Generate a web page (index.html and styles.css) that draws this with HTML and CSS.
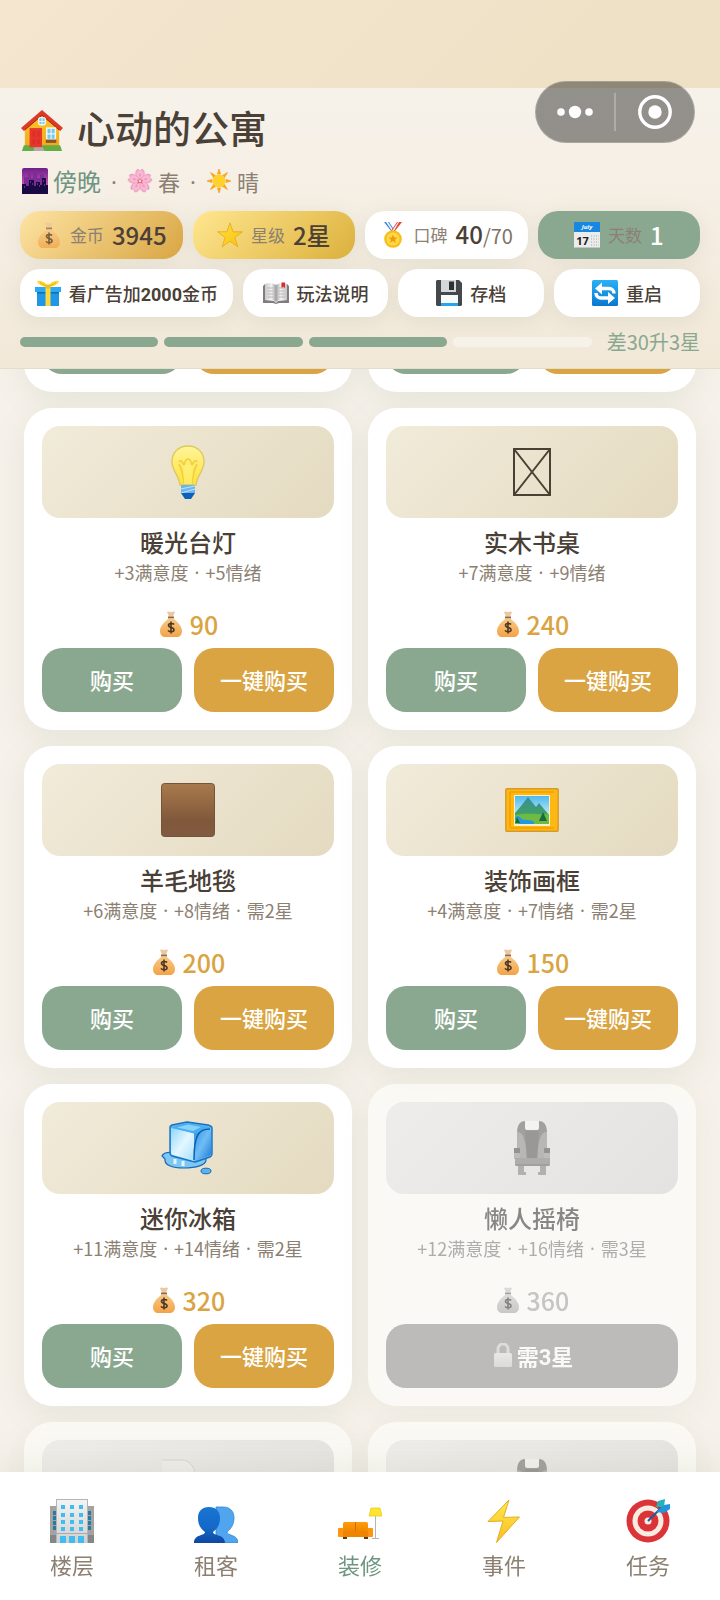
FILE: index.html
```
<!DOCTYPE html>
<html lang="zh-CN">
<head>
<meta charset="utf-8">
<meta name="viewport" content="width=device-width, initial-scale=1">
<title>心动的公寓</title>
<link rel="stylesheet" href="styles.css">
</head>
<body>
<svg class="sprite" aria-hidden="true">
  <defs>
    <linearGradient id="g-wall" x1="0" y1="0" x2="0" y2="1"><stop offset="0" stop-color="#fbc82a"/><stop offset="1" stop-color="#f3a91c"/></linearGradient>
    <linearGradient id="g-dusk" x1="0" y1="0" x2="0" y2="1"><stop offset="0" stop-color="#6a1f8c"/><stop offset=".5" stop-color="#b548a4"/><stop offset="1" stop-color="#ef7a8f"/></linearGradient>
    <radialGradient id="g-petal"><stop offset="0" stop-color="#f28fb8"/><stop offset=".5" stop-color="#f9c0d8"/><stop offset="1" stop-color="#f0a6c7"/></radialGradient>
    <linearGradient id="g-bag" x1="0" y1="0" x2="0" y2="1"><stop offset="0" stop-color="#f8c983"/><stop offset="1" stop-color="#f3a348"/></linearGradient>
    <linearGradient id="g-star" x1="0" y1="0" x2="1" y2="1"><stop offset="0" stop-color="#ffe23c"/><stop offset="1" stop-color="#fbbf10"/></linearGradient>
    <linearGradient id="g-blue" x1="0" y1="0" x2="0" y2="1"><stop offset="0" stop-color="#29b1f5"/><stop offset="1" stop-color="#0a78cf"/></linearGradient>
    <linearGradient id="g-page" x1="0" y1="0" x2="1" y2="0"><stop offset="0" stop-color="#c9c9c9"/><stop offset=".3" stop-color="#f1f1f1"/><stop offset=".5" stop-color="#9f9f9f"/><stop offset=".7" stop-color="#f1f1f1"/><stop offset="1" stop-color="#c2c2c2"/></linearGradient>
    <linearGradient id="g-bulb" x1="0" y1="0" x2="0" y2="1"><stop offset="0" stop-color="#fff59a"/><stop offset="1" stop-color="#ffe13a"/></linearGradient>
    <linearGradient id="g-rug" x1="0" y1="0" x2="0" y2="1"><stop offset="0" stop-color="#a97a4d"/><stop offset=".7" stop-color="#80583b"/><stop offset="1" stop-color="#815b40"/></linearGradient>
    <linearGradient id="g-sky" x1="0" y1="0" x2="0" y2="1"><stop offset="0" stop-color="#4fb9f3"/><stop offset=".7" stop-color="#c5ecf2"/></linearGradient>
    <linearGradient id="g-hill" x1="0" y1="0" x2="0" y2="1"><stop offset="0" stop-color="#3c8c98"/><stop offset="1" stop-color="#3fa757"/></linearGradient>
    <linearGradient id="g-iceL" x1="0" y1="0" x2="1" y2="1"><stop offset="0" stop-color="#8dd6fa"/><stop offset=".5" stop-color="#e4f7ff"/><stop offset="1" stop-color="#a9dffb"/></linearGradient>
    <linearGradient id="g-iceR" x1="0" y1="0" x2="1" y2="1"><stop offset="0" stop-color="#2b93e6"/><stop offset=".5" stop-color="#70bdf5"/><stop offset="1" stop-color="#1b79d3"/></linearGradient>
    <linearGradient id="g-tower" x1="0" y1="0" x2="0" y2="1"><stop offset="0" stop-color="#f4f4f4"/><stop offset="1" stop-color="#cfcfcf"/></linearGradient>
    <linearGradient id="g-man" x1="0" y1="0" x2="0" y2="1"><stop offset="0" stop-color="#1976d2"/><stop offset=".6" stop-color="#1467c6"/><stop offset="1" stop-color="#0d47a1"/></linearGradient>
    <linearGradient id="g-sofa" x1="0" y1="0" x2="0" y2="1"><stop offset="0" stop-color="#ff9d0a"/><stop offset="1" stop-color="#ef7f00"/></linearGradient>
    <linearGradient id="g-bolt" x1="0" y1="0" x2="0" y2="1"><stop offset="0" stop-color="#ffe94a"/><stop offset="1" stop-color="#fbbd22"/></linearGradient>
    <linearGradient id="g-lock" x1="0" y1="0" x2="0" y2="1"><stop offset="0" stop-color="#e2e2e2"/><stop offset="1" stop-color="#cccccc"/></linearGradient>
  </defs>

  <symbol id="i-house" viewBox="0 0 44 44">
    <path d="M4 20 22 4 40 20V40H4Z" fill="url(#g-wall)"/>
    <path d="M0 20 22 1 44 20 41 23 22 7 3 23Z" fill="#dd3a26"/>
    <path d="M4 22 22 6.500 40 22" fill="none" stroke="#a8261c" stroke-width="1"/>
    <path d="M1 44 3 38H41L43 44Z" fill="#63ad43"/><path d="M13 44 14 39H22L25 44Z" fill="#b6a8a5"/>
    <rect x="9" y="20" width="13" height="20" fill="#e8362c"/><path d="M12 23h3v6h-3zM17 23h3v6h-3zM12 32h3v5h-3zM17 32h3v5h-3z" fill="#d93028"/>
    <rect x="27" y="20" width="9" height="12" fill="#6dccf2" stroke="#f7f3ea" stroke-width="1.600"/><path d="M31.500 20v12M27 26h9" stroke="#f7f3ea" stroke-width="1.200"/>
    <rect x="26" y="32" width="11" height="3.500" fill="#8a5526"/>
    <rect x="18.500" y="9" width="7" height="7.500" rx="2" fill="#6dccf2" stroke="#f7f3ea" stroke-width="1.400"/><path d="M22 9v7.500M18.500 13h7" stroke="#f7f3ea"/>
  </symbol>
  <symbol id="i-city" viewBox="0 0 26 26">
    <rect width="26" height="26" rx="2" fill="url(#g-dusk)"/>
    <path d="M2 18V9h4V5h3v5h2V3l2-2 2 2v7h3V6h4v5h2v9Z" fill="#7c2d97"/>
    <path d="M0 26V16h4v2h3v-6h5v6h2v-4h4v3h2v-7h4v7h2v9Z" fill="#170a45"/>
    <path d="M2 19h1M8 14h1M10 16h1M15 16h1M21 13h1M17 18h1M22 17h1" stroke="#b0656b"/>
  </symbol>
  <symbol id="i-flower" viewBox="0 0 26 26">
    <g fill="url(#g-petal)" stroke="#ec94ba" stroke-width=".5">
      <path id="petal" d="M13 13C7 8 8 2 11 1l2 2 2-2c3 1 4 7-2 12Z"/>
      <use href="#petal" transform="rotate(72 13 13)"/><use href="#petal" transform="rotate(144 13 13)"/><use href="#petal" transform="rotate(216 13 13)"/><use href="#petal" transform="rotate(288 13 13)"/>
    </g>
    <path d="m13 9.500.8 2.400 2.500-.3-1.600 1.900 1.200 2.500L13 14.800 10.100 16l1.200-2.500-1.600-1.900 2.500.3Z" fill="#e65c90"/><circle cx="13" cy="13" r="1.200" fill="#fbe58a"/>
  </symbol>
  <symbol id="i-sun" viewBox="0 0 26 26">
    <path d="m13 1 1.500 5h-3ZM13 25l1.500-5h-3ZM1 13l5-1.500v3ZM25 13l-5-1.500v3ZM4.500 4.500 9.500 7.500l-2 2ZM21.500 4.500l-5 3 2 2ZM4.500 21.500l3-5 2 2ZM21.500 21.500l-3-5-2 2Z" fill="#f9a61c" stroke="#f9a61c" stroke-width=".8"/>
    <circle cx="13" cy="13" r="6.500" fill="#ffd12b"/>
  </symbol>
  <symbol id="i-coin" viewBox="0 0 26 26">
    <path d="M9 1c1.500-1.300 2.800 0 4 0s2.500-1.300 4 0l-2 4.500h-4Z" fill="#ecc7a0"/><path d="M10 5.500h6v2h-6z" fill="#8a6a48"/>
    <path d="M10.500 7.500h5c3 3 8.500 7 8.500 12.500 0 4-2.500 6-5 6H7c-2.500 0-5-2-5-6 0-5.500 5.500-9.500 8.500-12.500Z" fill="url(#g-bag)"/>
    <path d="M16 13.500c-1-1.500-5.500-1.500-5.500.8 0 3 5.500 1.600 5.500 4.600 0 2.300-4.800 2.300-6 .5M13 10.500v12" fill="none" stroke="#4b3627" stroke-width="1.600"/>
  </symbol>
  <symbol id="i-star" viewBox="0 0 26 26"><path d="m13 .8 3 9h9.400l-7.600 5.600 3 9.400L13 19.200l-7.800 5.600 3-9.400L.6 9.800H10Z" fill="url(#g-star)" stroke="#dba31d" stroke-width=".7"/></symbol>
  <symbol id="i-medal" viewBox="0 0 26 26">
    <path d="M4 0h5l6 9h-4Z" fill="#3586dc"/><path d="M6 0h2l6 9h-2Z" fill="#f3f0f2"/><path d="M22 0h-5l-6 9h4Z" fill="#e3483c"/><path d="M19 0h-1l-6 9h2Z" fill="#f3f0f2"/>
    <circle cx="13" cy="17" r="8.800" fill="#f9bd17"/><circle cx="13" cy="17" r="6.600" fill="#ffd84a"/><path d="m13 12.500 1.300 3h3.200L15 17.700l1 3.300-3-1.900-3 1.900 1-3.300-2.500-2.200h3.200Z" fill="#ee9e0c"/>
  </symbol>
  <symbol id="i-gift" viewBox="0 0 26 26">
    <path d="M2 10h22v16H2z" fill="#1f96e6"/><path d="M0 7h26v5H0z" fill="#2ba9f2"/><path d="M2 12h22v1.500H2z" fill="#0c6fb8"/>
    <path d="M10.500 7h5v19h-5z" fill="#fbd83b"/><path d="M13 7C9 7 3 5 2 1c4-1 9 1 11 6ZM13 7c4 0 10-2 11-6-4-1-9 1-11 6Z" fill="#fdd935"/><path d="M12 6C9 5 7 4 5 2.500M14 6c3-1 5-2 7-3.500" stroke="#e3ab14" fill="none"/><rect x="10.500" y="4.500" width="5" height="4" rx="1" fill="#f2bd22"/>
  </symbol>
  <symbol id="i-book" viewBox="0 0 26 26">
    <path d="M0 6 2 4v16l9 1 2 2 2-2 9-1V4l2 2v17H16l-3 1-3-1H0Z" fill="#827d7d"/>
    <path d="M2 4c4-2 8-1 11 1 3-2 7-3 11-1v16c-4-1-8-1-11 2-3-3-7-3-11-2Z" fill="url(#g-page)"/>
    <path d="M4.500 8h6M4.500 11h6M4.500 14h6M4.500 17h6M15.500 8h6M15.500 11h6M15.500 14h6M15.500 17h6" stroke="#b5b5b5" stroke-width=".9"/>
    <path d="M18.500 2.500h3.500v5.500l-1.700-1.300L18.500 8Z" fill="#e0262e"/>
  </symbol>
  <symbol id="i-disk" viewBox="0 0 26 26">
    <path d="M0 1 1 0h22l3 3v22l-1 1H1l-1-1Z" fill="#45484b"/><path d="M5 0h15v12H5z" fill="#d3d7da"/><path d="M13 1.500h5V10h-5z" fill="#2e3133"/>
    <path d="M5 15h17v11H5z" fill="#f8fbfd"/><path d="M5 23h17v3H5z" fill="#25a6ec"/>
  </symbol>
  <symbol id="i-reload" viewBox="0 0 26 26">
    <rect width="26" height="26" rx="1.500" fill="url(#g-blue)"/>
    <path d="M7 8.500h10a5 5 0 0 1 5 5M19 18H9a5 5 0 0 1-5-5" fill="none" stroke="#fff" stroke-width="3.400"/>
    <path d="M3 8.500 10 2.500v12ZM23 18l-7 6V12Z" fill="#fff"/>
  </symbol>
  <symbol id="i-bulb" viewBox="0 0 54 54">
    <path d="M27 1C17 1 11 8 11 17c0 9 7 13 8 23h16c1-10 8-14 8-23C43 8 37 1 27 1Z" fill="url(#g-bulb)" stroke="#dcca5e" stroke-width="1.400"/>
    <path d="M18 19c3 5 4 9 5 20M36 19c-3 5-4 9-5 20M18 17c3-4 5 4 5 4s1-7 4-7 4 7 4 7 2-8 5-4" fill="none" stroke="#efcf3c" stroke-width="1.600"/>
    <path d="M22 20h10l-1 19h-8Z" fill="#fff27a" opacity=".6"/>
    <path d="M20 40h14v8l-4 5h-6l-4-5Z" fill="#6bb4ed"/><path d="m20 44 14-3M20 48l14-4" stroke="#bfe0f8" stroke-width="1.200"/><path d="M20 48h14l-4 6h-6Z" fill="#0d5fb9"/>
  </symbol>
  <symbol id="i-missing" viewBox="0 0 54 54"><path d="M9 4h36v46H9zL45 50M45 4 9 50" fill="none" stroke="#4a4034" stroke-width="2"/></symbol>
  <symbol id="i-rug" viewBox="0 0 54 54"><rect x=".5" y=".5" width="53" height="53" rx="3" fill="url(#g-rug)" stroke="#76543a"/></symbol>
  <symbol id="i-frame" viewBox="0 0 54 54">
    <rect x=".8" y="5.800" width="52.400" height="42.400" rx="1" fill="#fdb813" stroke="#d69a2c" stroke-width="1.400"/><path d="M5 9h44M5 45h44M5 9v36" stroke="#f7a500" stroke-width="2"/>
    <path d="M9 12h36v31H9z" fill="#f7f1c9"/><path d="M10 13h34v28H10z" fill="url(#g-sky)"/>
    <path d="m10 30 6-7 7-9 8 10 3-4 10 12v5H10Z" fill="url(#g-hill)"/><path d="M10 32c12-3 24 0 34-1v10H10Z" fill="#6fba43"/><path d="M12 33c6 1 2 4 10 4 8 0 7 3 7 4H14c0-3-4-3-4-6Z" fill="#2497df"/><path d="m38 29 4 9h-8ZM12 34l3 6h-5Z" fill="#1b6c3c"/>
  </symbol>
  <symbol id="i-ice" viewBox="0 0 54 54">
    <path d="M1 35c2-4 8-4 12-3h20c8 0 12 3 12 7 0 5-10 8-22 8C11 47 3 44 4 38Z" fill="#7fc6f3" stroke="#1569b8" stroke-width="1.200"/>
    <ellipse cx="45" cy="50" rx="5" ry="2.800" fill="#62b1ea" stroke="#1569b8"/>
    <path d="M9 6Q9 5 11 4L26 1 47 4Q51 5 51 7V33Q51 35 49 36L34 41 11 35Q9 34 9 32Z" fill="#5fb6f2" stroke="#1473c4" stroke-width="1.400" stroke-linejoin="round"/>
    <path d="M10 7v25q0 2 2 2l21 6V12Z" fill="url(#g-iceL)"/><path d="M33 12v28l15-5q2-1 2-3V7Z" fill="url(#g-iceR)"/><path d="m10 6.500 16-4.500 24 4.500-17 6Z" fill="#48aef0"/><path d="m16 6.500 11-3 13 2.500-8 4Z" fill="#8ad3f8"/>
    <path d="M49 8c-11 0-16 5-16 31" fill="none" stroke="#0f5fae" stroke-width="1.500"/><path d="M14 38v5M22 40v5" stroke="#e3f5ff" stroke-width="3"/>
  </symbol>
  <symbol id="i-seat" viewBox="0 0 54 54">
    <path d="M13 44h6v7h2v3h-8v-2ZM41 44h-6v7h-2v3h8v-2Z" fill="#888"/>
    <path d="M12 38V12C12 4 15 0 20 0h14c5 0 8 4 8 12v26Z" fill="#6b6b6b"/><path d="M20 0h14v7c0 1-1 2-2 2H22c-1 0-2-1-2-2Z" fill="#f4f4f4"/>
    <path d="M12 11c6-1 9 8 10 28H12ZM42 11c-6-1-9 8-10 28h10Z" fill="#929292"/><path d="M20 10h14l-2 28H22Z" fill="#5e5e5e"/>
    <path d="M9 27h6v11H9zM39 27h6v11h-6z" fill="#9a9a9a"/><path d="M9 27h6v5H9zM39 27h6v5h-6z" fill="#555"/><rect x="10" y="37" width="35" height="8" rx="1" fill="#808080"/><path d="M11 44h33" stroke="#666" stroke-width="1.500"/>
  </symbol>
  <symbol id="i-sheet" viewBox="0 0 54 54"><path d="M1 1h20c7 0 12 6 13 14v38H1Z" fill="#ededeb"/><path d="M1 1h20c7 0 12 6 13 14" fill="none" stroke="#c4c4c4" stroke-width="1"/></symbol>
  <symbol id="i-lock" viewBox="0 0 24 24"><path d="M7 11V6a5 5 0 0 1 10 0v5" fill="none" stroke="#cfcfcf" stroke-width="3"/><rect x="3" y="10" width="18" height="14" rx="1.500" fill="url(#g-lock)"/></symbol>
  <symbol id="i-tower" viewBox="0 0 44 44">
    <path d="M0 7h7v37H0zM37 7h7v37h-7z" fill="#a3a3a3"/><path d="M3 12h3v4H3zM3 17h3v4H3zM3 22h3v4H3zM3 27h3v4H3zM38 12h3v4h-3zM38 17h3v4h-3zM38 22h3v4h-3zM38 27h3v4h-3z" fill="#287b9c"/><path d="M0 36h7v8H0zM37 36h7v8h-7z" fill="#858585"/>
    <path d="M6 0h32v44H6z" fill="url(#g-tower)"/><path d="M6 .5h32M6.500 0v44M37.500 0v44" stroke="#b5b5b5"/>
    <path d="M11 6h4v4h-4zM20 6h4v4h-4zM29 6h4v4h-4zM11 14h4v4h-4zM20 14h4v4h-4zM29 14h4v4h-4zM11 21h4v4h-4zM20 21h4v4h-4zM29 21h4v4h-4zM11 28h4v4h-4zM20 28h4v4h-4zM29 28h4v4h-4zM10 37h6v7h-6zM19 37h6v7h-6zM28 37h6v7h-6z" fill="#3fbcf0"/>
    <path d="M6 34.500h32" stroke="#ababab"/>
  </symbol>
  <symbol id="i-people" viewBox="0 0 44 44">
    <path d="M29 8c7 0 11 4 11 11 0 6-3 11-7 14 0 4 11 2 11 11H22V8Z" fill="#51a5ef" stroke="#2f87d4" stroke-width=".8"/>
    <path d="M15 8C8 8 4 12 4 19c0 7 3 11 7 14 0 4-11 2-11 11h31c0-9-12-7-12-11 4-3 7-7 7-14 0-7-4-11-11-11Z" fill="url(#g-man)"/>
  </symbol>
  <symbol id="i-sofa" viewBox="0 0 44 44">
    <path d="M5 38h4v2H5zM26 38h4v2h-4z" fill="#5b3716"/><rect x="5" y="23" width="25" height="12" rx="1.500" fill="url(#g-sofa)"/><path d="M17.500 23v9" stroke="#c96e05"/>
    <rect y="29" width="5.500" height="9" rx="1" fill="#ff9411"/><rect x="29.500" y="29" width="5.500" height="9" rx="1" fill="#ff9411"/><path d="M5 32h25v6H5z" fill="#ee8400"/>
    <path d="M37.500 16v23M34 39.500h7" stroke="#b5b5b5" stroke-width="1"/><path d="M33 9h9l2 8H31Z" fill="#ffe52b" stroke="#e8c41d" stroke-width=".7"/>
  </symbol>
  <symbol id="i-bolt" viewBox="0 0 44 44"><path d="M27 1 6 22.500l15-.5-6.500 21.500L37.500 18l-16 .4Z" fill="url(#g-bolt)" stroke="#e3ad25" stroke-width="1" stroke-linejoin="round"/></symbol>
  <symbol id="i-target" viewBox="0 0 44 44">
    <circle cx="22" cy="22" r="21.500" fill="#dc3338"/><circle cx="22" cy="22" r="15.500" fill="#f8ebe0"/><circle cx="22" cy="22" r="10.500" fill="#dc3338"/><circle cx="22" cy="22" r="3.500" fill="#f8ebe0"/>
    <path d="M22 22 35 9" stroke="#1b5c9c" stroke-width="2"/><path d="M30 8 32 2l7-2-1 8Z" fill="#22b1bd"/><path d="m30 13 8-7 6-1v5l-6 4Z" fill="#2196d8"/>
  </symbol>
</svg>

<div class="app">
  <div class="status-bar"></div>
  <div class="capsule">
    <button type="button" aria-label="更多"><svg width="36" height="14" viewBox="0 0 36 14"><g fill="#fff"><circle cx="4" cy="7" r="3.800"/><circle cx="18" cy="7" r="6.200"/><circle cx="32" cy="7" r="3.800"/></g></svg></button>
    <button type="button" aria-label="关闭"><svg width="34" height="34" viewBox="0 0 34 34"><circle cx="17" cy="17" r="15.200" fill="none" stroke="#fff" stroke-width="3.400"/><circle cx="17" cy="17" r="6.700" fill="#fff"/></svg></button>
  </div>

  <header class="header">
    <h1 class="title"><svg class="icon-title" aria-hidden="true"><use href="#i-house"/></svg>心动的公寓</h1>
    <p class="weather"><svg class="icon" aria-hidden="true"><use href="#i-city"/></svg><span class="weather-time">傍晚</span><span class="dot">·</span><svg class="icon" aria-hidden="true"><use href="#i-flower"/></svg><span>春</span><span class="dot">·</span><svg class="icon" aria-hidden="true"><use href="#i-sun"/></svg><span>晴</span></p>
    <div class="stats">
      <div class="pill pill-coin"><svg class="icon faded" aria-hidden="true"><use href="#i-coin"/></svg><span class="pill-label">金币</span><span class="pill-value">3945</span></div>
      <div class="pill pill-star"><svg class="icon" aria-hidden="true"><use href="#i-star"/></svg><span class="pill-label">星级</span><span class="pill-value">2星</span></div>
      <div class="pill"><svg class="icon" aria-hidden="true"><use href="#i-medal"/></svg><span class="pill-label">口碑</span><span class="pill-value">40<span class="pill-max">/70</span></span></div>
      <div class="pill pill-day"><svg class="icon" viewBox="0 0 26 26" aria-hidden="true">
        <rect width="26" height="26" rx="1.500" fill="#ececec"/><path d="M0 0h26v10H0z" fill="#1787e0"/><path d="M1 25.500h24" stroke="#c5c5c5"/>
        <text x="13" y="7" text-anchor="middle" class="cal-month">July</text><text x="8.500" y="23" text-anchor="middle" class="cal-day">17</text>
        <path d="M17 14h8M17 17h8M17 20h8M17 23h8" stroke="#a8a8a8" stroke-dasharray="1 1.500"/>
      </svg><span class="pill-label">天数</span><span class="pill-value">1</span></div>
    </div>
    <div class="tools">
      <button type="button" class="pill tool"><svg class="icon" aria-hidden="true"><use href="#i-gift"/></svg><span>看广告加<b>2000</b>金币</span></button>
      <button type="button" class="pill tool"><svg class="icon" aria-hidden="true"><use href="#i-book"/></svg>玩法说明</button>
      <button type="button" class="pill tool"><svg class="icon" aria-hidden="true"><use href="#i-disk"/></svg>存档</button>
      <button type="button" class="pill tool"><svg class="icon" aria-hidden="true"><use href="#i-reload"/></svg>重启</button>
    </div>
    <div class="progress">
      <div class="segments"><span class="segment done"></span><span class="segment done"></span><span class="segment done"></span><span class="segment"></span></div>
      <span class="progress-text">差30升3星</span>
    </div>
  </header>

  <main class="shop">
    <div class="grid">
      <article class="card"><div class="actions"><button type="button" class="btn buy" aria-label="购买"></button><button type="button" class="btn quick" aria-label="一键购买"></button></div></article>
      <article class="card"><div class="actions"><button type="button" class="btn buy" aria-label="购买"></button><button type="button" class="btn quick" aria-label="一键购买"></button></div></article>

      <article class="card">
        <div class="thumb"><svg class="icon-item" aria-hidden="true"><use href="#i-bulb"/></svg></div>
        <h2 class="name">暖光台灯</h2><p class="desc">+3满意度<span class="sep">·</span>+5情绪</p>
        <p class="price"><svg class="icon" aria-hidden="true"><use href="#i-coin"/></svg>90</p>
        <div class="actions"><button type="button" class="btn buy">购买</button><button type="button" class="btn quick">一键购买</button></div>
      </article>
      <article class="card">
        <div class="thumb"><svg class="icon-item" aria-hidden="true"><use href="#i-missing"/></svg></div>
        <h2 class="name">实木书桌</h2><p class="desc">+7满意度<span class="sep">·</span>+9情绪</p>
        <p class="price"><svg class="icon" aria-hidden="true"><use href="#i-coin"/></svg>240</p>
        <div class="actions"><button type="button" class="btn buy">购买</button><button type="button" class="btn quick">一键购买</button></div>
      </article>
      <article class="card">
        <div class="thumb"><svg class="icon-item" aria-hidden="true"><use href="#i-rug"/></svg></div>
        <h2 class="name">羊毛地毯</h2><p class="desc">+6满意度<span class="sep">·</span>+8情绪<span class="sep">·</span>需2星</p>
        <p class="price"><svg class="icon" aria-hidden="true"><use href="#i-coin"/></svg>200</p>
        <div class="actions"><button type="button" class="btn buy">购买</button><button type="button" class="btn quick">一键购买</button></div>
      </article>
      <article class="card">
        <div class="thumb"><svg class="icon-item" aria-hidden="true"><use href="#i-frame"/></svg></div>
        <h2 class="name">装饰画框</h2><p class="desc">+4满意度<span class="sep">·</span>+7情绪<span class="sep">·</span>需2星</p>
        <p class="price"><svg class="icon" aria-hidden="true"><use href="#i-coin"/></svg>150</p>
        <div class="actions"><button type="button" class="btn buy">购买</button><button type="button" class="btn quick">一键购买</button></div>
      </article>
      <article class="card">
        <div class="thumb"><svg class="icon-item" aria-hidden="true"><use href="#i-ice"/></svg></div>
        <h2 class="name">迷你冰箱</h2><p class="desc">+11满意度<span class="sep">·</span>+14情绪<span class="sep">·</span>需2星</p>
        <p class="price"><svg class="icon" aria-hidden="true"><use href="#i-coin"/></svg>320</p>
        <div class="actions"><button type="button" class="btn buy">购买</button><button type="button" class="btn quick">一键购买</button></div>
      </article>
      <article class="card locked">
        <div class="thumb"><svg class="icon-item" aria-hidden="true"><use href="#i-seat"/></svg></div>
        <h2 class="name">懒人摇椅</h2><p class="desc">+12满意度<span class="sep">·</span>+16情绪<span class="sep">·</span>需3星</p>
        <p class="price"><svg class="icon" aria-hidden="true"><use href="#i-coin"/></svg>360</p>
        <div class="actions"><button type="button" class="btn lock" disabled><svg class="icon-lock" aria-hidden="true"><use href="#i-lock"/></svg>需3星</button></div>
      </article>
      <article class="card locked"><div class="thumb"><svg class="icon-item" aria-hidden="true"><use href="#i-sheet"/></svg></div></article>
      <article class="card locked"><div class="thumb"><svg class="icon-item" aria-hidden="true"><use href="#i-seat"/></svg></div></article>
    </div>
  </main>

  <nav class="tabs">
    <a class="tab" href="#floors"><svg class="icon-tab" aria-hidden="true"><use href="#i-tower"/></svg>楼层</a>
    <a class="tab" href="#tenants"><svg class="icon-tab" aria-hidden="true"><use href="#i-people"/></svg>租客</a>
    <a class="tab active" href="#decor" aria-current="page"><svg class="icon-tab" aria-hidden="true"><use href="#i-sofa"/></svg>装修</a>
    <a class="tab" href="#events"><svg class="icon-tab" aria-hidden="true"><use href="#i-bolt"/></svg>事件</a>
    <a class="tab" href="#tasks"><svg class="icon-tab" aria-hidden="true"><use href="#i-target"/></svg>任务</a>
  </nav>
</div>
</body>
</html>
```
FILE: styles.css
```
:root {
  --green: #8aa890;
  --gold: #d9a441;
  --text: #4a4036;
  --muted: #8b8072;
}

* { box-sizing: border-box; }

body, h1, h2, p { margin: 0; }

body {
  background: #f6f1ea;
  color: var(--text);
  font-family: "Noto Sans CJK SC", sans-serif;
}

button {
  border: 0;
  padding: 0;
  color: inherit;
  font-family: Roboto, "Noto Sans CJK SC", sans-serif;
}

.sprite { position: absolute; width: 0; height: 0; }

.icon { flex: none; width: 26px; height: 26px; }
.icon-title { flex: none; align-self: center; width: 42px; height: 42px; }
.icon-item { width: 54px; height: 54px; }
.icon-lock { width: 24px; height: 24px; }
.icon-tab { width: 44px; height: 44px; }
.faded { opacity: 0.75; }

.cal-month { font: italic 700 6px "Open Sans", sans-serif; fill: #fff; }
.cal-day { font: 700 11px "Open Sans", sans-serif; fill: #222; }

.app {
  position: relative;
  display: flex;
  flex-direction: column;
  height: 100vh;
}

.status-bar {
  flex: none;
  height: 88px;
  background: linear-gradient(135deg, #f4e6cf, #eee0c4);
}

.capsule {
  position: absolute;
  z-index: 3;
  top: 81px;
  right: 25px;
  display: flex;
  width: 160px;
  height: 62px;
  padding: 11px 0;
  border: 1px solid rgba(255, 255, 255, 0.2);
  border-radius: 31px;
  background: rgba(0, 0, 0, 0.4);
}

.capsule button {
  flex: 1;
  display: flex;
  align-items: center;
  justify-content: center;
  background: none;
}

.capsule button + button { border-left: 2px solid rgba(255, 255, 255, 0.25); }

.header {
  position: relative;
  z-index: 1;
  flex: none;
  padding: 18px 20px 13px;
  border-bottom: 1px solid #e4ddce;
  background: linear-gradient(#f6f2ea, #f6efe5 35%, #f1e8d8);
}

.title {
  display: flex;
  gap: 14px;
  height: 48px;
  padding-left: 1px;
  font-size: 38px;
  font-weight: 500;
  line-height: 42px;
}

.weather {
  display: flex;
  align-items: center;
  gap: 5px;
  height: 30px;
  margin: 12px 0 15px;
  padding-left: 2px;
  color: var(--muted);
  font-size: 22px;
  line-height: 26px;
}

.weather-time { color: #6e9580; font-size: 24px; }
.dot { width: 16px; text-align: center; }
.dot, .sep { font-family: "Noto Sans", sans-serif; }

.stats, .tools { display: grid; gap: 10px; }
.stats { grid-template-columns: repeat(4, 1fr); }
.tools { grid-template-columns: 213fr 146fr 146fr 146fr; margin-top: 10px; }

.pill {
  display: flex;
  align-items: center;
  justify-content: center;
  gap: 8px;
  height: 48px;
  border-radius: 20px;
  background: #fff;
  box-shadow: 0 4px 20px rgba(120, 140, 110, 0.12);
  white-space: nowrap;
}

.pill-coin { background: linear-gradient(135deg, #fde3a2, #d9a644); }
.pill-star { background: linear-gradient(135deg, #ffe68f, #dcb13d); }
.pill-day { background: var(--green); }
.pill-label { color: var(--muted); font-size: 17px; line-height: 26px; }
.pill-value { font-size: 24px; font-weight: 500; line-height: 32px; }
.pill-max { color: #7d7264; font-size: 20px; font-weight: 400; }
.pill-day .pill-value { color: #fff; }
.tool { font-size: 18px; font-weight: 500; }

.progress {
  display: flex;
  align-items: center;
  gap: 15px;
  height: 26px;
  margin-top: 12px;
}

.segments { flex: 1; display: flex; gap: 6px; }

.segment {
  flex: 1;
  height: 10px;
  border-radius: 5px;
  background: #f6f1e9;
}

.segment.done { background: var(--green); }
.progress-text { color: var(--green); font-size: 20px; line-height: 26px; }

.shop {
  flex: 1;
  min-height: 0;
  overflow: hidden;
}

/* The list is scrolled so that its first row ends just below the header. */
.grid {
  display: grid;
  grid-template-columns: 1fr 1fr;
  gap: 16px;
  margin-top: -77px;
  padding: 0 24px;
}

.card {
  padding: 18px;
  border-radius: 28px;
  background: #fff;
  box-shadow: 0 8px 32px rgba(120, 145, 110, 0.12);
}

.locked { opacity: 0.6; background: #fffffc; }
.locked > * { filter: grayscale(1); }

.thumb {
  display: flex;
  align-items: center;
  justify-content: center;
  height: 92px;
  border-radius: 18px;
  background: linear-gradient(135deg, #f1ebda, #e4dac0);
}

.name {
  margin-top: 10px;
  font-size: 24px;
  font-weight: 500;
  line-height: 28px;
  text-align: center;
}

.desc {
  display: flex;
  justify-content: center;
  gap: 6px;
  margin: 3px 0 23px;
  color: var(--muted);
  font-size: 18px;
  line-height: 26px;
}

.price {
  display: flex;
  align-items: center;
  justify-content: center;
  gap: 6px;
  margin-bottom: 8px;
  color: var(--gold);
  font-size: 25px;
  font-weight: 500;
  line-height: 32px;
}

.actions { display: flex; gap: 12px; }

.btn {
  flex: 1;
  display: flex;
  align-items: center;
  justify-content: center;
  gap: 2px;
  height: 64px;
  padding-bottom: 2px;
  border-radius: 20px;
  color: #fff;
  font-size: 22px;
  font-weight: 500;
}

.buy { background: var(--green); }
.quick { background: var(--gold); }
.lock { background: #989898; font-weight: 700; }

.tabs {
  position: relative;
  z-index: 2;
  flex: none;
  display: flex;
  padding: 27px 0 20px;
  background: #fff;
  box-shadow: 0 -4px 40px rgba(120, 140, 110, 0.15);
}

.tab {
  flex: 1;
  display: flex;
  flex-direction: column;
  align-items: center;
  gap: 5px;
  color: var(--muted);
  font-size: 22px;
  line-height: 32px;
  text-decoration: none;
}

.tab.active { color: #6e9580; }
```
